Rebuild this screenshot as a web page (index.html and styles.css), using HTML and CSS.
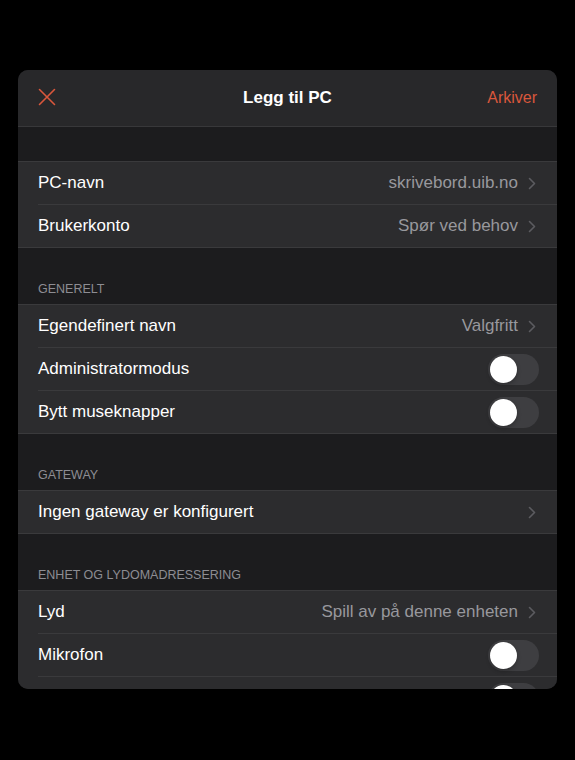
FILE: index.html
```html
<!DOCTYPE html>
<html lang="nb">
<head>
    <meta charset="UTF-8">
    <meta name="viewport" content="width=device-width, initial-scale=1.0">
    <title>Legg til PC</title>
    <link rel="stylesheet" href="styles.css">
</head>
<body>

    <div class="sheet">
        <div class="navbar">
            <button class="close" type="button" aria-label="Lukk">
                <svg width="18" height="18" viewBox="0 0 18 18">
                    <path d="M1.5 1.5 L16.5 16.5 M16.5 1.5 L1.5 16.5" stroke="#d9573c" stroke-width="1.6" stroke-linecap="round" fill="none"/>
                </svg>
            </button>
            <h1 class="title">Legg til PC</h1>
            <button class="save" type="button">Arkiver</button>
        </div>

        <div class="spacer"></div>

        <div class="group">
            <div class="row">
                <span class="label">PC-navn</span>
                <span class="value">skrivebord.uib.no</span>
                <svg class="chevron" width="8" height="13" viewBox="0 0 8 13"><path d="M1.5 1.5 L6.5 6.5 L1.5 11.5" /></svg>
            </div>
            <div class="row">
                <span class="label">Brukerkonto</span>
                <span class="value">Spør ved behov</span>
                <svg class="chevron" width="8" height="13" viewBox="0 0 8 13"><path d="M1.5 1.5 L6.5 6.5 L1.5 11.5" /></svg>
            </div>
        </div>

        <div class="section-title">Generelt</div>
        <div class="group">
            <div class="row">
                <span class="label">Egendefinert navn</span>
                <span class="value">Valgfritt</span>
                <svg class="chevron" width="8" height="13" viewBox="0 0 8 13"><path d="M1.5 1.5 L6.5 6.5 L1.5 11.5" /></svg>
            </div>
            <div class="row">
                <span class="label">Administratormodus</span>
                <span class="toggle"><span class="knob"></span></span>
            </div>
            <div class="row">
                <span class="label">Bytt museknapper</span>
                <span class="toggle"><span class="knob"></span></span>
            </div>
        </div>

        <div class="section-title">Gateway</div>
        <div class="group">
            <div class="row">
                <span class="label">Ingen gateway er konfigurert</span>
                <span class="value"></span>
                <svg class="chevron" width="8" height="13" viewBox="0 0 8 13"><path d="M1.5 1.5 L6.5 6.5 L1.5 11.5" /></svg>
            </div>
        </div>

        <div class="section-title">Enhet og lydomadressering</div>
        <div class="group">
            <div class="row">
                <span class="label">Lyd</span>
                <span class="value">Spill av på denne enheten</span>
                <svg class="chevron" width="8" height="13" viewBox="0 0 8 13"><path d="M1.5 1.5 L6.5 6.5 L1.5 11.5" /></svg>
            </div>
            <div class="row">
                <span class="label">Mikrofon</span>
                <span class="toggle"><span class="knob"></span></span>
            </div>
            <!-- next row only peeks in below the fold -->
            <div class="row">
                <span class="label"></span>
                <span class="toggle"><span class="knob"></span></span>
            </div>
        </div>
    </div>

</body>
</html>
```

FILE: styles.css
```css
body { margin: 0; background: #000; font-family: "Liberation Sans", Arial, sans-serif; color: #fff; }

.sheet { margin: 70px 18px 0; height: 619px; border-radius: 10px; overflow: hidden; background: #1c1c1e; }

.navbar { height: 56px; display: flex; align-items: center; padding: 0 20px; background: #28282a; border-bottom: 1px solid #38383a; }
.navbar button { background: none; border: 0; padding: 0; font: inherit; cursor: pointer; }
.close { width: 80px; display: flex; align-items: center; margin-top: -2px; }
.title { flex: 1; margin: 0; text-align: center; font-size: 17px; font-weight: bold; }
.save { width: 80px; text-align: right; color: #d9573c; font-size: 17.5px; }

.spacer { height: 34px; }

.group { background: #2c2c2e; border-top: 1px solid #3a3a3c; border-bottom: 1px solid #3a3a3c; }
.row { height: 42px; margin-left: 20px; padding-right: 18px; display: flex; align-items: center; border-bottom: 1px solid #3a3a3c; font-size: 17px; }
.row:last-child { border-bottom: 0; }
.label { flex: 1; white-space: nowrap; }
.value { color: #98989d; white-space: nowrap; }
.chevron { margin: 0 3px 0 10px; }
.chevron path { fill: none; stroke: #5c5c60; stroke-width: 1.6; stroke-linecap: round; stroke-linejoin: round; }

.section-title { height: 56px; display: flex; align-items: flex-end; padding: 0 20px 8px; box-sizing: border-box; color: #8d8d93; font-size: 12.5px; text-transform: uppercase; }

.toggle { width: 51px; height: 31px; border-radius: 16px; background: #3e3e41; display: flex; align-items: center; padding: 0 2px; box-sizing: border-box; }
.knob { width: 27px; height: 27px; border-radius: 50%; background: #fff; box-shadow: 0 2px 4px rgba(0, 0, 0, 0.25); }
```
